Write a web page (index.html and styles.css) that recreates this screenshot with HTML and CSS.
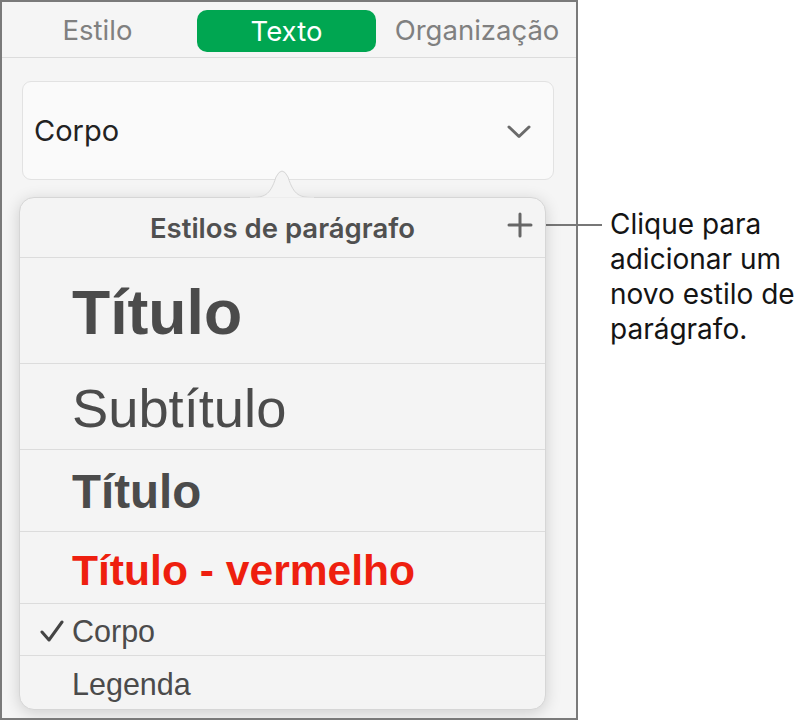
FILE: index.html
```html
<!DOCTYPE html>
<html lang="pt">
<head>
<meta charset="utf-8">
<title>Estilos de parágrafo</title>
<link rel="stylesheet" href="styles.css">
</head>
<body>
<div class="page">
  <div class="frame">
    <div class="tabs">
      <div class="tab">Estilo</div>
      <div class="tab active">Texto</div>
      <div class="tab">Organização</div>
    </div>
    <div class="select">
      <span class="select-label">Corpo</span>
      <svg class="chevron" width="24" height="14" viewBox="0 0 24 14"><path d="M2 2 L12 11.5 L22 2" fill="none" stroke="#6a6a6a" stroke-width="3" stroke-linecap="round" stroke-linejoin="round"/></svg>
    </div>
    <div class="popover">
      <svg class="arrow" width="64" height="30" viewBox="0 0 64 30"><path d="M0 29.5 C14 29.5 20 28 26 9 Q32 -3 38 9 C44 28 50 29.5 64 29.5" fill="#f4f4f4" stroke="#d6d6d6" stroke-width="1"/><rect x="0" y="29.5" width="64" height="2" fill="#f4f4f4"/></svg>
      <div class="pop-header">
        <span class="pop-title">Estilos de parágrafo</span>
        <svg class="plus" width="26" height="26" viewBox="0 0 26 26"><path d="M13 2 V24 M2 13 H24" stroke="#666" stroke-width="3" stroke-linecap="round"/></svg>
      </div>
      <div class="row r1"><span class="item big">Título</span></div>
      <div class="row r2"><span class="item sub">Subtítulo</span></div>
      <div class="row r3"><span class="item head">Título</span></div>
      <div class="row r4"><span class="item red">Título - vermelho</span></div>
      <div class="row r5">
        <svg class="check" width="24" height="22" viewBox="0 0 24 22"><path d="M2 12 L9 20 L22 2" fill="none" stroke="#444" stroke-width="3" stroke-linecap="round" stroke-linejoin="round"/></svg>
        <span class="item body">Corpo</span>
      </div>
      <div class="row r6"><span class="item body">Legenda</span></div>
    </div>
  </div>
  <div class="callout">
    <div class="leader"></div>
    <p class="callout-text">Clique para<br>adicionar um<br>novo estilo de<br>parágrafo.</p>
  </div>
</div>
</body>
</html>
```
FILE: styles.css
```css
html, body {
  margin: 0;
  padding: 0;
  background: #ffffff;
}
.page {
  display: flex;
  align-items: flex-start;
  width: 801px;
  height: 721px;
}
.frame {
  box-sizing: border-box;
  width: 578px;
  height: 720px;
  border: 2px solid #7a7a7a;
  background: #f5f5f5;
  overflow: hidden;
  font-family: "Inter", "Liberation Sans", sans-serif;
}
.tabs {
  height: 55px;
  border-bottom: 1px solid #dcdcdc;
  display: grid;
  grid-template-columns: 191px 191px 192px;
  align-items: center;
  justify-items: center;
}
.tab {
  font-size: 27.5px;
  color: #808080;
}
.tab.active {
  width: 179px;
  height: 42px;
  margin-left: -4px;
  margin-top: 3px;
  border-radius: 10px;
  background: #00a651;
  color: #ffffff;
  display: flex;
  align-items: center;
  justify-content: center;
}
.tabs .tab:last-child {
  margin-left: -6px;
}
.select {
  box-sizing: border-box;
  margin: 23px 0 0 20px;
  width: 532px;
  height: 99px;
  border: 1px solid #e2e2e2;
  border-radius: 9px;
  background: #fafafa;
  display: flex;
  align-items: center;
  justify-content: space-between;
  padding: 0 22px 0 11px;
}
.select-label {
  font-size: 29px;
  color: #222;
}
.chevron {
  margin-top: 2px;
}
.popover {
  position: relative;
  box-sizing: border-box;
  margin: 17px 0 0 17px;
  width: 527px;
  height: 513px;
  border: 1px solid #d6d6d6;
  border-radius: 15px;
  background: #f4f4f4;
  box-shadow: 0 3px 16px rgba(0, 0, 0, 0.16);
}
.arrow {
  position: absolute;
  left: 230px;
  top: -30px;
}
.pop-header {
  height: 59px;
  border-bottom: 1px solid #dcdcdc;
  display: flex;
  align-items: center;
  justify-content: center;
  position: relative;
}
.pop-title {
  font-size: 27.5px;
  font-weight: 600;
  color: #505050;
}
.plus {
  position: absolute;
  right: 12px;
  top: 14px;
}
.row {
  display: flex;
  align-items: center;
  border-bottom: 1px solid #dcdcdc;
  padding-left: 52px;
  position: relative;
  font-family: "Liberation Sans", Arial, sans-serif;
  color: #4b4b4b;
}
.row:last-child {
  border-bottom: none;
}
.r1 { height: 105px; }
.r2 { height: 85px; }
.r3 { height: 81px; }
.r4 { height: 71px; }
.r5 { height: 51px; }
.r6 { height: 52px; }
.item {
  line-height: 1;
}
.big {
  font-size: 62.5px;
  font-weight: 700;
  margin-top: 4px;
}
.sub {
  font-size: 54.3px;
  margin-top: 6px;
}
.head {
  font-size: 47.5px;
  font-weight: 700;
  margin-top: 2px;
}
.red {
  font-size: 42.6px;
  font-weight: 700;
  color: #ee1f0f;
  margin-top: 6px;
}
.body {
  font-size: 30.5px;
  margin-top: 4px;
}
.check {
  position: absolute;
  left: 20px;
  top: 16px;
}
.callout {
  display: flex;
  align-items: flex-start;
  margin-top: 207px;
  margin-left: -40px;
}
.leader {
  width: 64px;
  height: 2px;
  background: #777;
  margin-top: 17px;
}
.callout-text {
  margin: 0 0 0 8px;
  font-family: "Inter", "Liberation Sans", sans-serif;
  font-size: 28px;
  line-height: 35px;
  color: #141414;
  white-space: nowrap;
}
```
